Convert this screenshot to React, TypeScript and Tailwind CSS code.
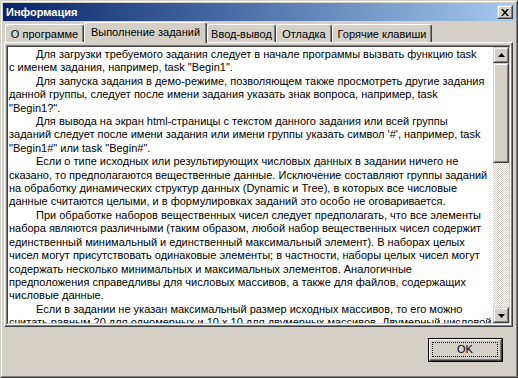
const FONT = "font-['Liberation_Sans',Arial,sans-serif]";

const lines: [boolean, string][] = [
  [true, "Для загрузки требуемого задания следует в начале программы вызвать функцию task"],
  [false, 'с именем задания, например, task "Begin1".'],
  [true, "Для запуска задания в демо-режиме, позволяющем также просмотреть другие задания"],
  [false, "данной группы, следует после имени задания указать знак вопроса, например, task"],
  [false, '"Begin1?".'],
  [true, "Для вывода на экран html-страницы с текстом данного задания или всей группы"],
  [false, "заданий следует после имени задания или имени группы указать символ '#', например, task"],
  [false, '"Begin1#" или task "Begin#".'],
  [true, "Если о типе исходных или результирующих числовых данных в задании ничего не"],
  [false, "сказано, то предполагаются вещественные данные. Исключение составляют группы заданий"],
  [false, "на обработку динамических структур данных (Dynamic и Tree), в которых все числовые"],
  [false, "данные считаются целыми, и в формулировках заданий это особо не оговаривается."],
  [true, "При обработке наборов вещественных чисел следует предполагать, что все элементы"],
  [false, "набора являются различными (таким образом, любой набор вещественных чисел содержит"],
  [false, "единственный минимальный и единственный максимальный элемент). В наборах целых"],
  [false, "чисел могут присутствовать одинаковые элементы; в частности, наборы целых чисел могут"],
  [false, "содержать несколько минимальных и максимальных элементов. Аналогичные"],
  [false, "предположения справедливы для числовых массивов, а также для файлов, содержащих"],
  [false, "числовые данные."],
  [true, "Если в задании не указан максимальный размер исходных массивов, то его можно"],
  [false, "считать равным 20 для одномерных и 10 x 10 для двумерных массивов. Двумерный числовой"],
];

const tabs = [
  { label: "О программе", w: "w-[79px]" },
  { label: "Выполнение заданий", w: "w-[123px]", active: true },
  { label: "Ввод-вывод", w: "w-[69px]" },
  { label: "Отладка", w: "w-[56px]" },
  { label: "Горячие клавиши", w: "w-[100px]" },
];

function Raised({ className = "", children }: { className?: string; children?: React.ReactNode }) {
  return (
    <div className={`border border-t-[#d4d0c8] border-l-[#d4d0c8] border-r-[#404040] border-b-[#404040] ${className}`}>
      <div className="w-full h-full border border-t-white border-l-white border-r-[#808080] border-b-[#808080] bg-[#d4d0c8] flex items-center justify-center">
        {children}
      </div>
    </div>
  );
}

function Arrow({ down }: { down?: boolean }) {
  return (
    <svg width="7" height="4" viewBox="0 0 7 4" className={down ? "mt-[1px]" : "-mt-[1px]"}>
      {down ? <polygon points="0,0 7,0 3.5,4" fill="#000" /> : <polygon points="3.5,0 7,4 0,4" fill="#000" />}
    </svg>
  );
}

export default function App() {
  return (
    <div className={`w-[518px] h-[378px] bg-[#d4d0c8] ${FONT} text-[11px] text-black select-none`}>
      <div className="w-full h-full border border-t-[#d4d0c8] border-l-[#d4d0c8] border-r-[#404040] border-b-[#404040]">
        <div className="w-full h-full border border-t-white border-l-white border-r-[#808080] border-b-[#808080] p-[1px] flex flex-col">
          {/* title bar */}
          <div className="h-[18px] bg-gradient-to-r from-[#0a246a] to-[#a6caf0] flex items-center justify-between pl-[3px] pr-[2px]">
            <span className="text-white font-bold text-[11px] leading-none">Информация</span>
            <Raised className="w-[16px] h-[14px]">
              <svg width="8" height="7" viewBox="0 0 8 7">
                <path d="M0 0h2l2 2.5L6 0h2L5 3.5 8 7H6L4 4.5 2 7H0l3-3.5z" fill="#000" />
              </svg>
            </Raised>
          </div>

          {/* tabs */}
          <div className="ml-[1px] w-[509px] flex flex-col">
            <div className="h-[21px] flex items-end pl-[1px]">
              {tabs.map((t) =>
                t.active ? (
                  <div
                    key={t.label}
                    className={`${t.w} h-[21px] -mb-[1px] relative z-10 bg-[#d4d0c8] border-l border-t border-r border-l-white border-t-white border-r-[#404040] rounded-t-[3px] shadow-[inset_-1px_0_#808080] flex items-center justify-center pb-[1px]`}
                  >
                    {t.label}
                  </div>
                ) : (
                  <div
                    key={t.label}
                    className={`${t.w} h-[18px] bg-[#d4d0c8] border-l border-t border-r border-l-white border-t-white border-r-[#404040] rounded-t-[3px] shadow-[inset_-1px_0_#808080] flex items-center justify-center pt-[1px]`}
                  >
                    {t.label}
                  </div>
                )
              )}
            </div>

            {/* panel */}
            <div className="h-[285px] border border-t-white border-l-white border-r-[#404040] border-b-[#404040]">
              <div className="w-full h-full border-r border-b border-[#808080] pl-[1px] pt-[2px]">
                <div className="w-[505px] h-[280px] border border-t-[#808080] border-l-[#808080] border-r-white border-b-white">
                  <div className="w-full h-full border border-t-[#404040] border-l-[#404040] border-r-[#d4d0c8] border-b-[#d4d0c8] flex">
                    <div className="flex-1 bg-white overflow-hidden pl-[1px] pt-[1px] leading-[13.4px]">
                      {lines.map(([indent, text], i) => (
                        <div key={i} className={`whitespace-nowrap ${indent ? "pl-[27px]" : ""}`}>
                          {text}
                        </div>
                      ))}
                    </div>
                    <div className="w-[16px] flex flex-col bg-[conic-gradient(#fff_25%,#d4d0c8_0_50%,#fff_0_75%,#d4d0c8_0)] bg-[length:2px_2px]">
                      <Raised className="w-[16px] h-[16px]">
                        <Arrow />
                      </Raised>
                      <Raised className="w-[16px] h-[100px]" />
                      <div className="flex-1" />
                      <Raised className="w-[16px] h-[16px]">
                        <Arrow down />
                      </Raised>
                    </div>
                  </div>
                </div>
              </div>
            </div>
          </div>

          {/* footer */}
          <div className="flex justify-end pr-[12px] pt-[11px]">
            <div className="w-[75px] h-[24px] border border-black">
              <div className="w-full h-full border border-t-white border-l-white border-r-[#404040] border-b-[#404040]">
                <div className="w-full h-full border-r border-b border-[#808080] p-[2px]">
                  <div className="w-full h-full border border-dotted border-black flex items-center justify-center">
                    OK
                  </div>
                </div>
              </div>
            </div>
          </div>
        </div>
      </div>
    </div>
  );
}
